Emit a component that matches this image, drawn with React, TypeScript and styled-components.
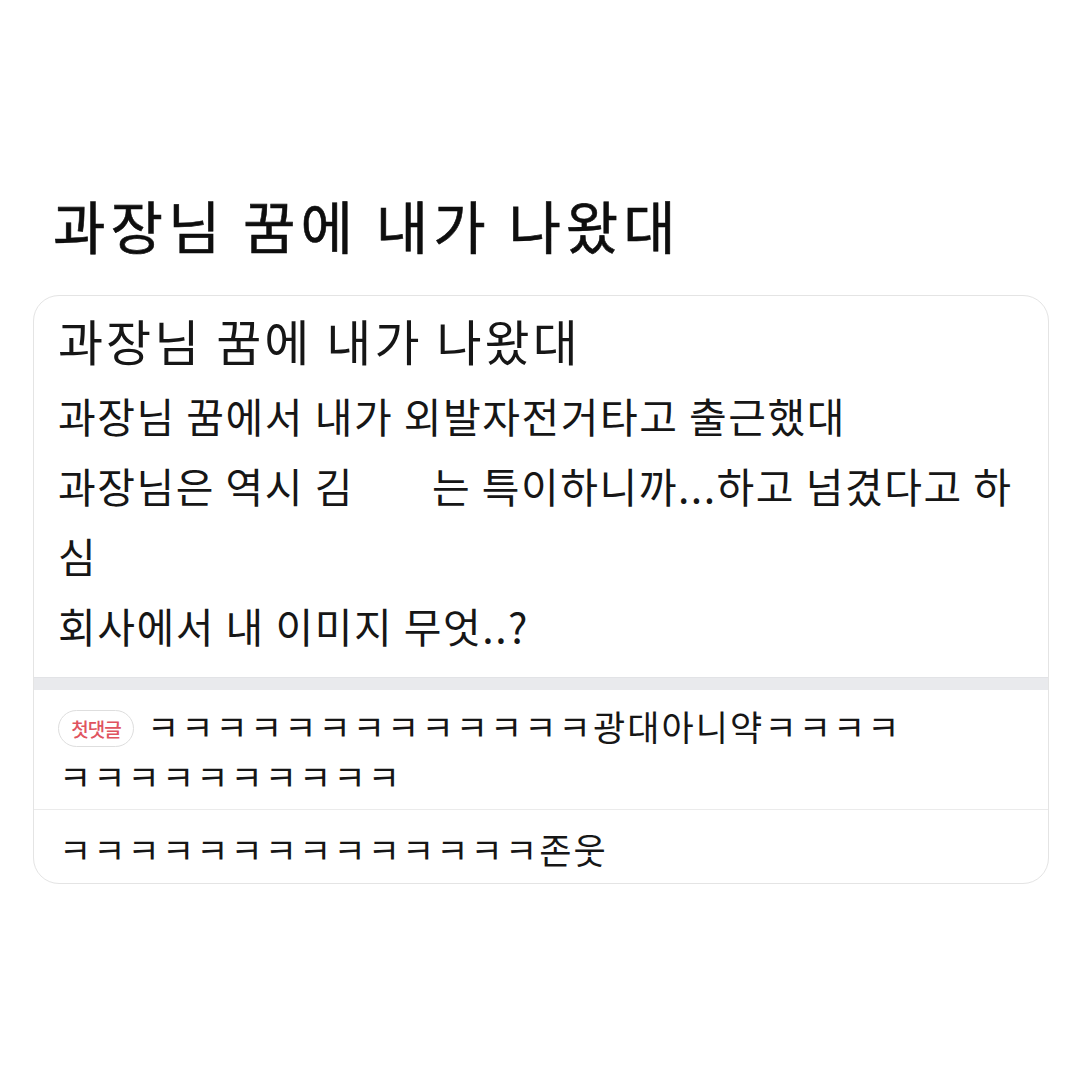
import React from "react";
import styled, { createGlobalStyle } from "styled-components";

const Global = createGlobalStyle`
  html, body { margin: 0; padding: 0; background: #ffffff; }
  body { font-family: "Noto Sans CJK KR", "Noto Sans", sans-serif; color: #111; }
`;

const Page = styled.div`
  width: 1080px;
  height: 1080px;
  box-sizing: border-box;
  padding: 189px 31px 0 33px;
`;

const Heading = styled.h1`
  margin: 0 0 36px 20px;
  font-size: 57px;
  line-height: 70px;
  font-weight: 400;
  color: #0e0e0e;
  letter-spacing: 5px;
  -webkit-text-stroke: 0.6px #0e0e0e;
`;

const Card = styled.div`
  border: 1.5px solid #e4e4e4;
  border-radius: 26px;
  overflow: hidden;
  background: #fff;
`;

const Post = styled.div`
  padding: 16px 25px 17px 24px;
`;

const PostTitle = styled.div`
  font-size: 49px;
  line-height: 56px;
  color: #161616;
  margin-bottom: 12px;
  letter-spacing: 3px;
`;

const BodyLine = styled.div`
  font-size: 41px;
  line-height: 70px;
  color: #161616;
  white-space: nowrap;
  letter-spacing: 1.5px;
`;

const Blank = styled.span<{ $w: number }>`
  display: inline-block;
  width: ${(p) => p.$w}px;
`;

const Band = styled.div`
  height: 12px;
  background: #e9eaed;
  border-top: 1px solid #e2e3e6;
`;

const Comment = styled.div<{ $top: number; $bottom: number }>`
  padding: ${(p) => p.$top}px 25px ${(p) => p.$bottom}px 25px;
  font-size: 35px;
  line-height: 50px;
  color: #161616;
  letter-spacing: 2.1px;
`;

const Divider = styled.div`
  height: 1px;
  background: #ebebeb;
`;

const Badge = styled.span`
  display: inline-flex;
  align-items: center;
  justify-content: center;
  box-sizing: border-box;
  height: 37px;
  width: 76px;
  border: 1.5px solid #dedede;
  border-radius: 19px;
  font-size: 19px;
  font-weight: 500;
  color: #e0545f;
  vertical-align: middle;
  margin: -6px 13px 0 -1px;
  letter-spacing: -1px;
`;

export default function App() {
  return (
    <>
      <Global />
      <Page>
        <Heading>과장님 꿈에 내가 나왔대</Heading>
        <Card>
          <Post>
            <PostTitle>과장님 꿈에 내가 나왔대</PostTitle>
            <BodyLine>과장님 꿈에서 내가 외발자전거타고 출근했대</BodyLine>
            <BodyLine>
              과장님은 역시 김<Blank $w={78} />는 특이하니까...하고 넘겼다고 하
            </BodyLine>
            <BodyLine>심</BodyLine>
            <BodyLine>회사에서 내 이미지 무엇..?</BodyLine>
          </Post>
          <Band />
          <Comment $top={11} $bottom={8}>
            <Badge>첫댓글</Badge>ㅋㅋㅋㅋㅋㅋㅋㅋㅋㅋㅋㅋㅋ광대아니약ㅋㅋㅋㅋ
            <br />
            ㅋㅋㅋㅋㅋㅋㅋㅋㅋㅋ
          </Comment>
          <Divider />
          <Comment $top={14} $bottom={9}>ㅋㅋㅋㅋㅋㅋㅋㅋㅋㅋㅋㅋㅋㅋ존웃</Comment>
        </Card>
      </Page>
    </>
  );
}
